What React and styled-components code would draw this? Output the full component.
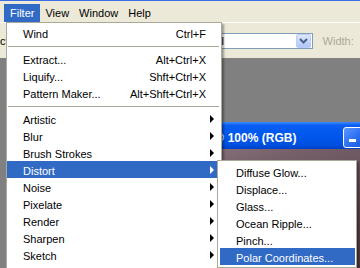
import React from 'react';
import styled, { createGlobalStyle } from 'styled-components';

const GlobalStyle = createGlobalStyle`
  html, body {
    margin: 0;
    padding: 0;
  }
  body {
    width: 360px;
    height: 268px;
    overflow: hidden;
    background: #808080;
    font-family: "Liberation Sans", Arial, sans-serif;
    font-size: 11px;
  }
`;

const Screen = styled.div`
  position: relative;
  width: 360px;
  height: 268px;
  overflow: hidden;
  display: flex;
  flex-direction: column;
  background: #808080;
`;

const MenuBar = styled.div`
  display: flex;
  align-items: flex-end;
  height: 22px;
  box-sizing: border-box;
  padding: 0 4px;
  background: #ece9d8;
  border-top: 1px solid #3a6ee6;
`;

const MenuTitle = styled.div`
  height: 18px;
  line-height: 18px;
  padding: 0 ${p => (p.$active ? 6 : 5)}px;
  color: ${p => (p.$active ? '#fff' : '#000')};
  background: ${p => (p.$active ? '#316ac5' : 'transparent')};
`;

const OptionsBar = styled.div`
  display: flex;
  align-items: center;
  height: 36px;
  box-sizing: border-box;
  background: #ece9d8;
  border-top: 1px solid #fff;
  white-space: nowrap;
  & > * {
    flex-shrink: 0;
  }
`;

const ToolLabel = styled.span`
  margin-left: -22px;
  color: #000;
`;

const Combo = styled.div`
  display: flex;
  align-items: center;
  margin-left: 176px;
  width: 128px;
  height: 16px;
  box-sizing: border-box;
  border: 1px solid #7f9db9;
  background: #fff;
  padding: 0 1px 0 3px;
`;

const ComboText = styled.span`
  flex: 1;
  color: #000;
`;

const ComboButton = styled.div`
  display: flex;
  align-items: center;
  justify-content: center;
  width: 15px;
  height: 14px;
  box-sizing: border-box;
  border: 1px solid #b9cdf6;
  border-radius: 2px;
  background: linear-gradient(#dde8fd, #c1d3fb 60%, #b0c6f7);
`;

const FieldLabel = styled.span`
  margin-left: 10px;
  color: #aca899;
`;

const Field = styled.div`
  margin-left: 6px;
  width: 40px;
  height: 16px;
  box-sizing: border-box;
  border: 1px solid #7f9db9;
  background: #fff;
`;

const Workspace = styled.div`
  position: relative;
  flex: 1;
  background: #808080;
`;

const DocWindow = styled.div`
  position: absolute;
  left: 150px;
  top: 64px;
  width: 265px;
  bottom: -20px;
  display: flex;
  flex-direction: column;
  background: #0841d6;
`;

const TitleBar = styled.div`
  display: flex;
  align-items: center;
  height: 27px;
  box-sizing: border-box;
  padding: 4px 5px 0 4px;
  background: linear-gradient(#3d8bff 0%, #0a5ef2 12%, #0058ee 45%, #0050e0 85%, #0040c8 100%);
  color: #fff;
  font-weight: bold;
  font-size: 12px;
  white-space: nowrap;
`;

const TitleButtons = styled.div`
  display: flex;
  gap: 2px;
  margin-left: auto;
`;

const CaptionButton = styled.div`
  position: relative;
  width: 21px;
  height: 21px;
  box-sizing: border-box;
  border: 1px solid #fff;
  border-radius: 3px;
  background: linear-gradient(135deg, #5c97ff, #2a6cf0 60%, #1c58e0);
`;

const MinusGlyph = styled.span`
  position: absolute;
  left: 5px;
  bottom: 5px;
  width: 7px;
  height: 3px;
  background: #fff;
`;

const Canvas = styled.div`
  flex: 1;
  margin: 0 4px;
  background: linear-gradient(165deg, #8e7a83 0%, #75606a 20%, #5a4449 55%, #4a3438 100%);
`;

const Menu = styled.div`
  position: absolute;
  left: 6px;
  top: 22px;
  width: 216px;
  box-sizing: border-box;
  padding: 1px 0 10px;
  background: #fff;
  border: 1px solid #aca899;
  box-shadow: 2px 2px 2px rgba(0, 0, 0, 0.35);
`;

const SubMenu = styled.div`
  position: absolute;
  left: calc(100% - 4px);
  top: -1px;
  width: 140px;
  box-sizing: border-box;
  padding: 2px 1px 2px 2px;
  background: #fff;
  border: 1px solid #aca899;
  box-shadow: 2px 2px 2px rgba(0, 0, 0, 0.35);
`;

const Item = styled.div`
  position: relative;
  display: grid;
  grid-template-columns: 1fr auto 15px;
  align-items: center;
  height: 17px;
  box-sizing: border-box;
  padding: 2px 0 0 16px;
  white-space: nowrap;
  color: ${p => (p.$active ? '#fff' : '#000')};
  background: ${p => (p.$active ? '#316ac5' : 'transparent')};
`;

const Shortcut = styled.span`
  text-align: right;
`;

const Arrow = styled.span`
  justify-self: start;
  margin: -2px 0 0 4px;
  width: 0;
  height: 0;
  border-top: 4px solid transparent;
  border-bottom: 4px solid transparent;
  border-left: 4px solid ${p => (p.$active ? '#fff' : '#000')};
`;

const Separator = styled.div`
  height: 9px;
  display: flex;
  align-items: flex-start;
  &::after {
    content: '';
    flex: 1;
    margin: 5px 2px 0 1px;
    height: 1px;
    background: #aca899;
  }
`;

const FILTER_MENU = [
  { label: 'Wind', shortcut: 'Ctrl+F' },
  'sep',
  { label: 'Extract...', shortcut: 'Alt+Ctrl+X' },
  { label: 'Liquify...', shortcut: 'Shft+Ctrl+X' },
  { label: 'Pattern Maker...', shortcut: 'Alt+Shft+Ctrl+X' },
  'sep',
  { label: 'Artistic', sub: true },
  { label: 'Blur', sub: true },
  { label: 'Brush Strokes', sub: true },
  { label: 'Distort', sub: true, open: true },
  { label: 'Noise', sub: true },
  { label: 'Pixelate', sub: true },
  { label: 'Render', sub: true },
  { label: 'Sharpen', sub: true },
  { label: 'Sketch', sub: true },
];

const DISTORT = [
  'Diffuse Glow...',
  'Displace...',
  'Glass...',
  'Ocean Ripple...',
  'Pinch...',
  'Polar Coordinates...',
];

function Chevron() {
  return (
    <svg width="9" height="6" viewBox="0 0 9 6">
      <path d="M1 1 L4.5 4.5 L8 1" fill="none" stroke="#4d6185" strokeWidth="2" />
    </svg>
  );
}

export default function App() {
  return (
    <Screen>
      <GlobalStyle />
      <MenuBar>
        <MenuTitle $active>Filter</MenuTitle>
        <MenuTitle>View</MenuTitle>
        <MenuTitle>Window</MenuTitle>
        <MenuTitle>Help</MenuTitle>
      </MenuBar>

      <OptionsBar>
        <ToolLabel>Select</ToolLabel>
        <Combo>
          <ComboText>Normal</ComboText>
          <ComboButton>
            <Chevron />
          </ComboButton>
        </Combo>
        <FieldLabel>Width:</FieldLabel>
        <Field />
      </OptionsBar>

      <Workspace>
        <DocWindow>
          <TitleBar>
            <span>Untitled-1 @ 100% (RGB)</span>
            <TitleButtons>
              <CaptionButton><MinusGlyph /></CaptionButton>
              <CaptionButton />
              <CaptionButton />
            </TitleButtons>
          </TitleBar>
          <Canvas />
        </DocWindow>
      </Workspace>

      <Menu>
        {FILTER_MENU.map((it, i) =>
          it === 'sep' ? (
            <Separator key={i} />
          ) : (
            <Item key={i} $active={it.open}>
              <span>{it.label}</span>
              <Shortcut>{it.shortcut}</Shortcut>
              {it.sub ? <Arrow $active={it.open} /> : <span />}
              {it.open && (
                <SubMenu>
                  {DISTORT.map((s, j) => (
                    <Item key={s} $active={j === DISTORT.length - 1}>
                      <span>{s}</span>
                      <span />
                      <span />
                    </Item>
                  ))}
                </SubMenu>
              )}
            </Item>
          )
        )}
      </Menu>
    </Screen>
  );
}
